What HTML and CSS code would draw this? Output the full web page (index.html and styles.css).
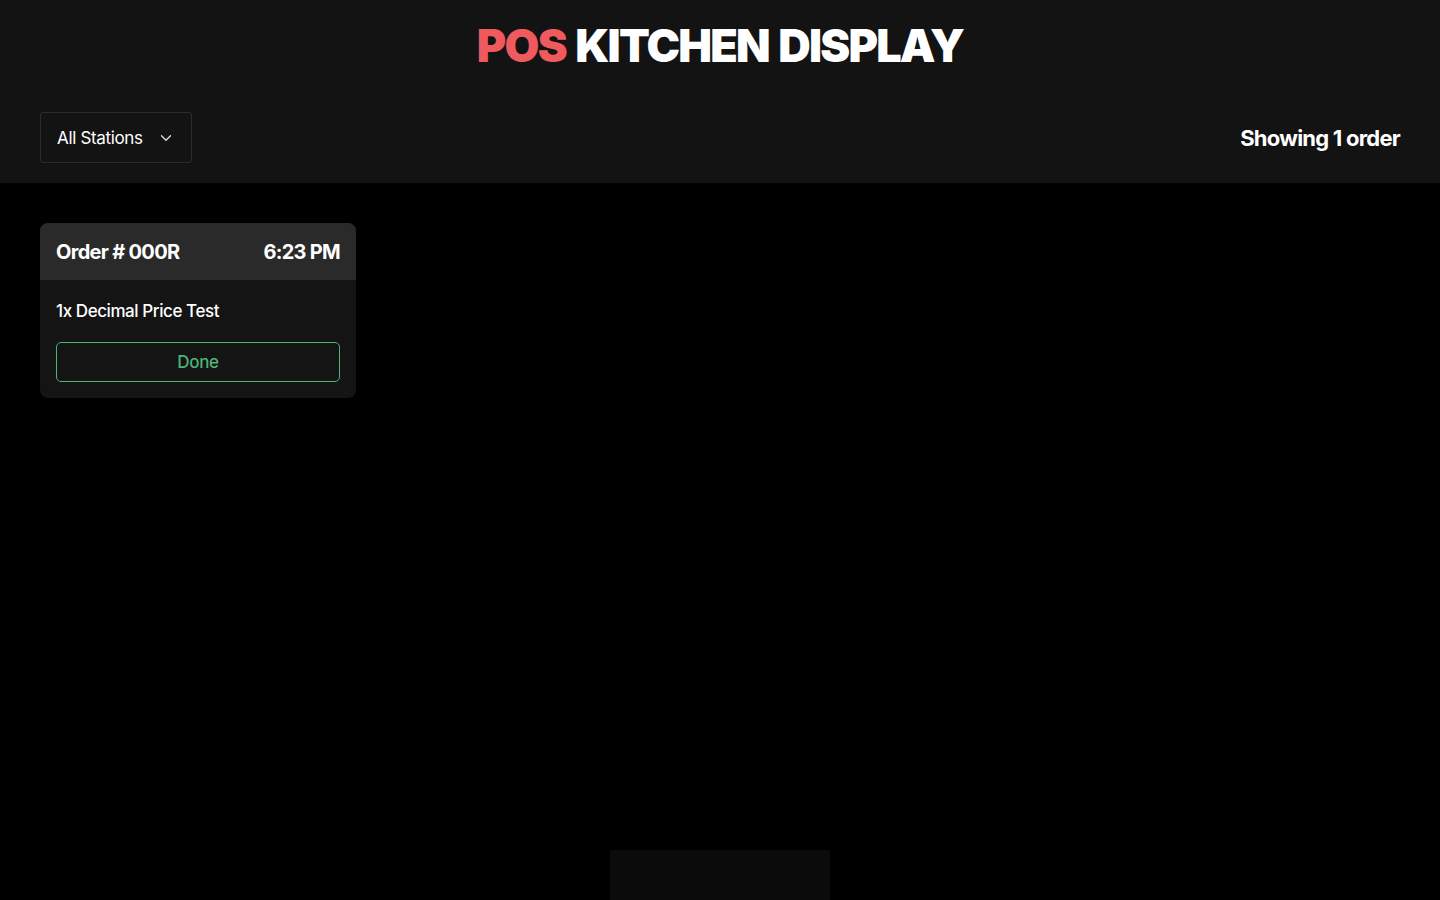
FILE: index.html
```html
<!DOCTYPE html>
<html lang="en">
<head>
    <meta charset="UTF-8">
    <meta name="viewport" content="width=device-width, initial-scale=1.0">
    <title>POS Kitchen Display</title>
    <link rel="stylesheet" href="styles.css">
</head>
<body>
    <header class="kds-header">
        <h1 class="kds-title"><span class="accent">POS</span> KITCHEN DISPLAY</h1>

        <div class="toolbar">
            <div class="station-select">
                <span>All Stations</span>
                <svg width="18" height="18" viewBox="0 0 24 24" fill="none" stroke="currentColor" stroke-width="1.8" stroke-linecap="round" stroke-linejoin="round">
                    <polyline points="6 9 12 15 18 9"></polyline>
                </svg>
            </div>
            <div class="order-count">Showing 1 order</div>
        </div>
    </header>

    <main class="orders">
        <div class="order-card">
            <div class="order-head">
                <span>Order # 000R</span>
                <span>6:23 PM</span>
            </div>
            <div class="order-body">
                <div class="order-item">1x Decimal Price Test</div>
                <button class="done-btn">Done</button>
            </div>
        </div>
    </main>

    <div class="toast-area"></div>
</body>
</html>
```

FILE: styles.css
```css
:root {
    --header-bg: #131313;
    --card-head: #2a2a2a;
    --card-body: #141414;
    --accent: #ef5a5f;
    --green: #4fb276;
}

* {
    margin: 0;
    padding: 0;
    box-sizing: border-box;
}

body {
    background: #000;
    color: #fff;
    font-family: 'Inter', 'Noto Sans', sans-serif;
    min-height: 100vh;
}

.kds-header {
    background: var(--header-bg);
    padding: 20px 40px 20px;
    height: 183px;
}

.kds-title {
    text-align: center;
    font-size: 45px;
    font-weight: 900;
    letter-spacing: -0.04em;
    word-spacing: 0.05em;
    line-height: 52px;
}

.kds-title .accent {
    color: var(--accent);
}

.toolbar {
    display: flex;
    justify-content: space-between;
    align-items: center;
    margin-top: 40px;
}

.station-select {
    display: flex;
    align-items: center;
    gap: 14px;
    width: 152px;
    height: 51px;
    padding: 0 16px;
    border: 1px solid #2c2c2c;
    border-radius: 3px;
    font-size: 17px;
    letter-spacing: -0.02em;
    white-space: nowrap;
}

.station-select svg {
    color: #ddd;
    flex-shrink: 0;
}

.order-count {
    font-size: 22px;
    font-weight: 700;
    letter-spacing: -0.035em;
}

.orders {
    padding: 40px;
    display: flex;
    flex-wrap: wrap;
    gap: 20px;
}

.order-card {
    width: 316px;
    border-radius: 8px;
    overflow: hidden;
    background: var(--card-body);
}

.order-head {
    display: flex;
    justify-content: space-between;
    align-items: center;
    height: 57px;
    padding: 0 16px;
    background: var(--card-head);
    font-size: 20px;
    font-weight: 700;
    letter-spacing: -0.035em;
}

.order-body {
    padding: 18px 16px 16px;
}

.order-item {
    font-size: 17px;
    font-weight: 500;
    letter-spacing: -0.025em;
    line-height: 26px;
}

.done-btn {
    display: block;
    width: 100%;
    height: 40px;
    margin-top: 18px;
    background: transparent;
    border: 1px solid var(--green);
    border-radius: 5px;
    color: var(--green);
    font-family: inherit;
    font-size: 17px;
    font-weight: 500;
    letter-spacing: -0.02em;
    cursor: pointer;
}

.toast-area {
    position: fixed;
    left: 50%;
    bottom: 0;
    transform: translateX(-50%);
    width: 220px;
    height: 50px;
    background: #0b0b0b;
}
```
